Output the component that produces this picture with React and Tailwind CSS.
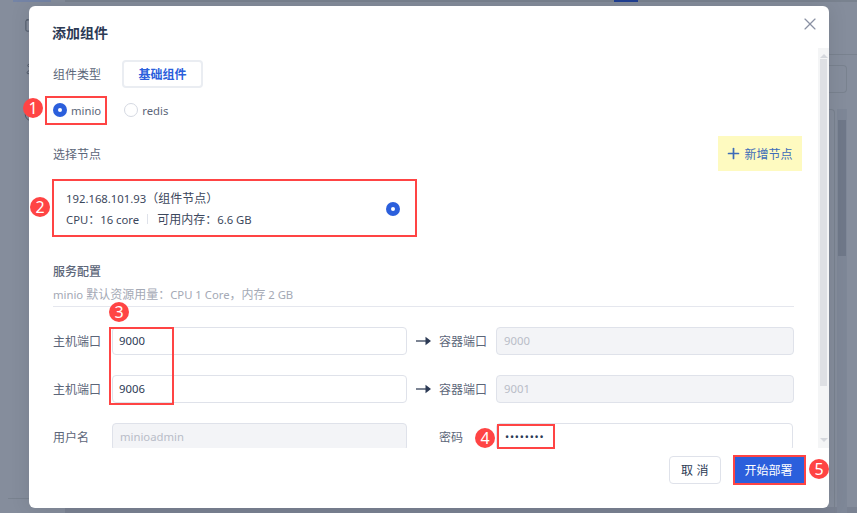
import { X, Plus, SquareCheck, Pin, Circle } from 'lucide-react'

const font = { fontFamily: '"Noto Sans CJK SC", "Noto Sans", sans-serif' }
const latin = { fontFamily: '"Noto Sans", sans-serif' }

// latin runs sit a little smaller than the 12px CJK text around them
function L({ children }) {
  return <span style={latin} className="text-[11.3px]">{children}</span>
}

function Badge({ n, className }) {
  return (
    <span style={latin} className={`absolute z-20 flex h-5 w-5 items-center justify-center rounded-full bg-[#ff4444] text-base leading-none text-white ${className}`}>{n}</span>
  )
}

function RedBox({ className }) {
  return <div className={`absolute z-10 border-2 border-[#f44] ${className}`} />
}

function Radio({ checked }) {
  if (checked) {
    return (
      <span className="flex h-[14px] w-[14px] shrink-0 items-center justify-center rounded-full bg-[#2b5fdc]">
        <span className="h-1 w-1 rounded-full bg-white" />
      </span>
    )
  }
  return <span className="h-[14px] w-[14px] shrink-0 rounded-full border border-[#d5d9e2] bg-white" />
}

function Input({ value, disabled, className = '' }) {
  return (
    <div style={latin} className={`flex h-7 items-center rounded border border-[#dfe2ea] text-[11.3px] ${disabled ? 'bg-[#f3f4f7] pl-[7px] text-[#b9bdc8]' : 'bg-white pl-[6px] text-[#2c3a55]'} ${className}`}>
      {value}
    </div>
  )
}

function PortArrow() {
  return (
    <svg width="15" height="10" viewBox="0 0 15 10" className="ml-[9px] shrink-0">
      <rect x="0" y="4.2" width="10" height="1.6" fill="#5c6679" />
      <path d="M9.5 0.8 L15 5 L9.5 9.2 Z" fill="#2c3a55" />
    </svg>
  )
}

function PortRow({ host, container }) {
  return (
    <div className="flex items-center">
      <span className="w-[59px] shrink-0 text-xs text-[#5c6679]">主机端口</span>
      <Input value={host} className="w-[295px]" />
      <PortArrow />
      <span className="ml-[8px] w-[57px] shrink-0 text-xs text-[#5c6679]">容器端口</span>
      <Input value={container} disabled className="w-[298px]" />
    </div>
  )
}

export default function App() {
  return (
    <div style={font} className="relative h-[513px] w-[857px] overflow-hidden bg-[#858d9c] pl-[29px] pt-[6px]">
      {/* dimmed page behind the dialog */}
      <div className="absolute left-[65px] top-0 h-[2px] w-[792px] bg-[#79828f]" />
      <div className="absolute left-[13px] top-0 h-[2px] w-[38px] bg-[#7484a6]" />
      <div className="absolute left-[614px] top-0 h-[2px] w-6 bg-[#1f3f94]" />
      <SquareCheck size={15} strokeWidth={1.6} className="absolute left-[24px] top-[18px] text-[#4f5868]" />
      <Pin size={15} strokeWidth={1.6} className="absolute left-[24px] top-[63px] text-[#4f5868]" />
      <Circle size={15} strokeWidth={1.6} className="absolute left-[24px] top-[107px] text-[#4f5868]" />
      <div className="absolute left-[8px] top-[498px] h-px w-[24px] bg-[#79828f]" />
      <div className="absolute bottom-0 left-[65px] h-[6px] w-[792px] bg-[#7a8292]" />
      <div className="absolute left-[829px] top-[54px] h-px w-7 bg-[#79828f]" />
      <div className="absolute left-[829px] top-[65px] h-[28px] w-[18px] rounded-r border border-l-0 border-[#79828f]" />
      <div className="absolute left-[829px] top-[109px] h-[404px] w-[6px] rounded-tr border-r border-t border-[#79828f]" />
      <div className="absolute left-[837px] top-[109px] h-[404px] w-[10px] bg-[#7e8797]" />
      <div className="absolute left-[838px] top-[120px] h-[136px] w-2 bg-[#6f7889]" />

      <div className="relative flex h-[502px] w-[800px] flex-col rounded-md bg-white shadow-[0_0_20px_rgba(0,0,0,0.1)]">
        <div className="flex h-[42px] shrink-0 items-start justify-between pl-[23px] pr-[9px] pt-[8px]">
          <h2 className="mt-[8px] text-sm font-bold leading-5 text-[#2c3a55]">添加组件</h2>
          <X size={20} strokeWidth={1.4} className="text-[#8a91a3]" />
        </div>

        <div className="relative h-[400px] overflow-hidden">
          <div className="h-full overflow-hidden pl-[24px] pr-[35px] pt-[12px]">
            <div className="flex items-center">
              <span className="w-[69px] text-xs text-[#5c6679]">组件类型</span>
              <span className="flex h-7 w-[81px] items-center justify-center rounded border-2 border-[#eaedf2] text-xs font-semibold text-[#2b5fdc]">基础组件</span>
            </div>

            <div className="mt-[12px] flex h-5 items-center text-xs leading-4 text-[#5c6679]">
              <Radio checked />
              <span className="ml-1"><L>minio</L></span>
              <span className="ml-[23px]" />
              <Radio />
              <span className="ml-1"><L>redis</L></span>
            </div>

            <div className="mt-[16px] flex items-center justify-between">
              <span className="text-xs text-[#5c6679]">选择节点</span>
              <span className="-mr-2 flex h-[35px] w-[84px] items-center justify-center gap-[2px] bg-[#fefac0] pr-[2px] text-xs text-[#3d6cb8]">
                <Plus size={17} strokeWidth={2.4} />
                新增节点
              </span>
            </div>

            <div className="mt-[10px] flex h-[55px] w-[363px] items-center justify-between pl-[13px] pr-[16px]">
              <div className="text-xs leading-5 text-[#3c475c]">
                <div><L>192.168.101.93</L>（组件节点）</div>
                <div className="flex items-center">
                  <span><L>CPU</L>：<L>16 core</L></span>
                  <span className="ml-[8px] mr-[9px] h-[10px] w-px bg-[#dfe2ea]" />
                  <span>可用内存：<L>6.6 GB</L></span>
                </div>
              </div>
              <Radio checked />
            </div>

            <div className="mt-[27px] text-xs font-medium text-[#5c6679]">服务配置</div>
            <div className="mt-[7px] border-b border-[#e5e7ee] pb-[3px] text-xs leading-4 text-[#a4a9b5]"><L>minio </L>默认资源用量：<L>CPU 1 Core</L>，内存 <L>2 GB</L></div>

            <div className="mt-5 flex flex-col gap-[20px]">
              <PortRow host="9000" container="9000" />
              <PortRow host="9006" container="9001" />
              <div className="flex items-center">
                <span className="w-[59px] shrink-0 text-xs text-[#5c6679]">用户名</span>
                <Input value="minioadmin" disabled className="w-[295px]" />
                <span className="ml-[32px] w-[57px] shrink-0 text-xs text-[#5c6679]">密码</span>
                <Input value="••••••••" className="w-[297px] !pl-[8px] !text-[11px] tracking-[0.8px]" />
              </div>
            </div>
          </div>

          {/* scrollbar */}
          <div className="absolute bottom-0 right-0 top-0 flex w-[11px] flex-col items-center bg-[#f4f5f6]">
            <div className="mt-[6px] h-0 w-0 border-x-[4px] border-b-[4px] border-x-transparent border-b-[#d5d8dd]" />
            <div className="mt-[1px] h-[327px] w-[7px] bg-[#dee0e4]" />
            <div className="mb-[6px] mt-auto h-0 w-0 border-x-[4px] border-t-[4px] border-x-transparent border-t-[#d5d8dd]" />
          </div>
        </div>

        <div className="flex flex-1 items-start justify-end gap-[14px] pr-[25px] pt-[8px]">
          <span className="flex h-7 w-[52px] items-center justify-center rounded border border-[#dfe2ea] text-xs tracking-[0.5px] text-[#2c3a55]">取 消</span>
          <span className="flex h-7 w-[69px] items-center justify-center bg-[#2b5fdc] pr-[2px] text-xs text-white">开始部署</span>
        </div>
      </div>

      {/* annotations */}
      <RedBox className="left-[45px] top-[96px] h-[29px] w-[62px]" />
      <RedBox className="left-[52px] top-[179px] h-[58px] w-[365px]" />
      <RedBox className="left-[109px] top-[327px] h-[78px] w-[65px]" />
      <RedBox className="left-[497px] top-[424px] h-[25px] w-[58px]" />
      <RedBox className="left-[733px] top-[455px] h-[30px] w-[73px]" />
      <Badge n="1" className="left-[23px] top-[98px]" />
      <Badge n="2" className="left-[30px] top-[197px]" />
      <Badge n="3" className="left-[109px] top-[302px]" />
      <Badge n="4" className="left-[475px] top-[428px]" />
      <Badge n="5" className="left-[809px] top-[459px]" />
    </div>
  )
}
